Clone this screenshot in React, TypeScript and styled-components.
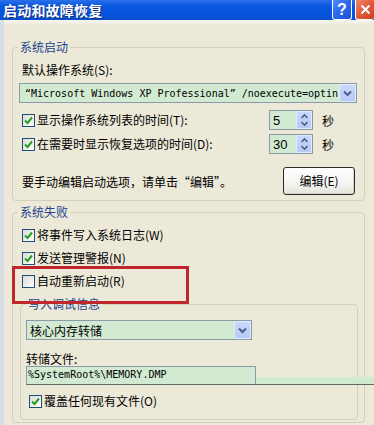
import React from "react";
import styled, { createGlobalStyle } from "styled-components";

const GlobalStyle = createGlobalStyle`
  html, body { margin: 0; padding: 0; background: #ece9d8; }
  body {
    width: 374px; height: 425px; overflow: hidden;
    font-family: "Noto Sans CJK SC", sans-serif;
    font-size: 12px; color: #000;
  }
  * { box-sizing: border-box; }
`;

const Window = styled.div`
  width: 374px;
  height: 425px;
  display: flex;
  flex-direction: column;
  overflow: hidden;
  position: relative;
`;

const TitleBar = styled.div`
  height: 20px;
  flex: 0 0 20px;
  display: flex;
  align-items: flex-start;
  justify-content: space-between;
  padding-left: 3px;
  background: linear-gradient(to bottom, #2a70ea 0%, #0a58df 30%, #0654dc 80%, #0a4cc8 100%);
`;

const Title = styled.div`
  color: #fff;
  font-weight: bold;
  font-size: 14px;
  line-height: 20px;
  letter-spacing: 0.2px;
  text-shadow: 1px 1px 0 #0b2a80;
`;

const TitleButtons = styled.div`
  display: flex;
  gap: 3px;
`;

const CaptionButton = styled.div<{ $kind: "help" | "close" }>`
  width: ${(p) => (p.$kind === "help" ? "20px" : "19px")};
  height: 20px;
  border: 1px solid #fff;
  border-top: none;
  border-radius: 0 0 3px 3px;
  border-right: ${(p) => (p.$kind === "close" ? "none" : "1px solid #fff")};
  background: ${(p) =>
    p.$kind === "help"
      ? "linear-gradient(135deg, #4f8cf7 0%, #2a66ea 50%, #1d52d6 100%)"
      : "linear-gradient(135deg, #f08a6a 0%, #e2593a 50%, #c9401f 100%)"};
  color: #fff;
  font-family: "Liberation Sans", sans-serif;
  font-weight: bold;
  font-size: 16px;
  line-height: 19px;
  text-align: center;
  display: flex;
  align-items: center;
  justify-content: center;
`;

const Body = styled.div`
  flex: 1;
  border-left: 4px solid #d7dee8;
  padding: 20px 9px 0 8px;
  background: linear-gradient(to bottom, #f6f5ef 0px, #ece9d8 6px);
  display: flex;
  flex-direction: column;
`;

const Group = styled.fieldset<{ $gap?: number }>`
  margin: ${(p) => p.$gap ?? 0}px 0 0 0;
  padding: 0;
  border: 1px solid #d0d0bf;
  border-radius: 4px;
  min-width: 0;
`;

const SubGroup = styled(Group)`
  margin: 5px -1px 0 1px;
`;

const Legend = styled.legend`
  margin-left: 5px;
  padding: 0 2px;
  color: #23428e;
  font-size: 12px;
  line-height: 14px;
`;

const GroupInner = styled.div<{ $pt: number; $pb: number; $pl: number; $pr: number }>`
  display: flex;
  flex-direction: column;
  padding: ${(p) => `${p.$pt}px ${p.$pr}px ${p.$pb}px ${p.$pl}px`};
`;

const Label = styled.div<{ $mt?: number; $ml?: number }>`
  line-height: 14px;
  margin-top: ${(p) => p.$mt ?? 0}px;
  margin-left: ${(p) => p.$ml ?? 0}px;
`;

const Combo = styled.div<{ $w?: number; $mt: number; $mono?: boolean }>`
  margin-top: ${(p) => p.$mt}px;
  width: ${(p) => (p.$w ? `${p.$w}px` : "auto")};
  height: 20px;
  border: 1px solid #8a9aa6;
  background: #d2ead2;
  display: flex;
  align-items: center;
  font-family: ${(p) => (p.$mono ? `"DejaVu Sans Mono", monospace` : `"Noto Sans CJK SC", sans-serif`)};
  font-size: ${(p) => (p.$mono ? "10px" : "12px")};
  padding-left: ${(p) => (p.$mono ? "5px" : "3px")};
`;

const ComboText = styled.span`
  flex: 1;
  white-space: nowrap;
  overflow: hidden;
`;

const DropButton = styled.div`
  width: 17px;
  height: 18px;
  border: 1px solid #e2ebfd;
  border-radius: 2px;
  background: linear-gradient(to bottom, #cad9fc 0%, #b6caf6 100%);
  display: flex;
  align-items: center;
  justify-content: center;
`;

const Row = styled.div<{ $mt?: number; $h?: number }>`
  display: flex;
  align-items: center;
  height: ${(p) => p.$h ?? 22}px;
  margin-top: ${(p) => p.$mt ?? 0}px;
  padding-left: 3px;
  position: relative;
`;

const Highlighted = styled(Row)`
  &::after {
    content: "";
    position: absolute;
    left: -7px;
    top: -4px;
    width: 171px;
    height: 32px;
    border: 3px solid #c0272d;
    pointer-events: none;
  }
`;

const CheckLabel = styled.div<{ $w?: number }>`
  display: flex;
  align-items: center;
  gap: 2px;
  flex: ${(p) => (p.$w ? `0 0 ${p.$w}px` : "0 0 auto")};
  line-height: 14px;
  white-space: nowrap;
`;

const Box = styled.span`
  width: 13px;
  height: 13px;
  border: 1px solid #1f4f7c;
  background: linear-gradient(135deg, #dcdcd4 0%, #f4f4f0 70%, #fff 100%);
  display: inline-flex;
  align-items: center;
  justify-content: center;
`;

const Spin = styled.div`
  width: 44px;
  height: 20px;
  border: 1px solid #8a9aa6;
  background: #d2ead2;
  display: flex;
  align-items: center;
  font-family: "Liberation Sans", sans-serif;
  font-size: 13px;
  padding-left: 3px;
`;

const SpinValue = styled.span`
  flex: 1;
`;

const SpinButtons = styled.div`
  width: 16px;
  height: 18px;
  border: 1px solid #e2ebfd;
  border-radius: 2px;
  background: linear-gradient(to bottom, #cad9fc 0%, #b6caf6 100%);
  display: flex;
  align-items: center;
  justify-content: center;
`;

const Sec = styled.span`
  margin-left: 9px;
`;

const EditRow = styled.div`
  display: flex;
  align-items: center;
  justify-content: space-between;
  margin-top: 12px;
  padding: 0 2px 0 3px;
`;

const Button = styled.div`
  width: 72px;
  height: 28px;
  border: 1px solid #2c2c2c;
  border-radius: 3px;
  background: linear-gradient(to bottom, #ffffff 0%, #f4f4f0 60%, #e3e3db 100%);
  box-shadow: inset -1px -1px 0 #d6d0c5;
  display: flex;
  align-items: center;
  justify-content: center;
  line-height: 14px;
`;

const FileField = styled.div`
  position: relative;
  width: 230px;
  height: 19px;
  border: 1px solid #8a9aa6;
  border-bottom-color: #5f6a66;
  background: #d2ead2;
  font-family: "DejaVu Sans Mono", monospace;
  font-size: 10px;
  line-height: 15px;
  padding-left: 1px;
`;

const Band = styled.span`
  position: absolute;
  left: 229px;
  bottom: -1px;
  width: 140px;
  height: 8px;
  background: #d2ead2;
  border-bottom: 1px solid #5f6a66;
`;

const Check = ({ on }: { on: boolean }) => (
  <Box>
    {on && (
      <svg width="11" height="11" viewBox="0 0 11 11">
        <polyline points="2,5.5 4.5,8 9,2.5" fill="none" stroke="#21a121" strokeWidth="2" />
      </svg>
    )}
  </Box>
);

const Chevron = () => (
  <svg width="9" height="7" viewBox="0 0 9 7">
    <polyline points="1,1.5 4.5,5 8,1.5" fill="none" stroke="#4a5e88" strokeWidth="2" />
  </svg>
);

const UpDown = () => (
  <svg width="9" height="14" viewBox="0 0 9 14">
    <polyline points="1.5,5 4.5,2 7.5,5" fill="none" stroke="#4a5e88" strokeWidth="1.6" />
    <polyline points="1.5,9 4.5,12 7.5,9" fill="none" stroke="#4a5e88" strokeWidth="1.6" />
  </svg>
);

export default function App() {
  return (
    <>
      <GlobalStyle />
      <Window lang="zh-CN">
        <TitleBar>
          <Title>启动和故障恢复</Title>
          <TitleButtons>
            <CaptionButton $kind="help">?</CaptionButton>
            <CaptionButton $kind="close">
              <svg width="11" height="11" viewBox="0 0 11 11">
                <path d="M1.5 1.5 L9.5 9.5 M9.5 1.5 L1.5 9.5" stroke="#fff" strokeWidth="2" />
              </svg>
            </CaptionButton>
          </TitleButtons>
        </TitleBar>
        <Body>
          <Group>
            <Legend>系统启动</Legend>
            <GroupInner $pt={9} $pb={5} $pl={6} $pr={7}>
              <Label $ml={3}>默认操作系统(S):</Label>
              <Combo $mt={6} $mono>
                <ComboText>“Microsoft Windows XP Professional” /noexecute=optin</ComboText>
                <DropButton>
                  <Chevron />
                </DropButton>
              </Combo>
              <Row $mt={6}>
                <CheckLabel $w={247}>
                  <Check on />
                  显示操作系统列表的时间(T):
                </CheckLabel>
                <Spin>
                  <SpinValue>5</SpinValue>
                  <SpinButtons>
                    <UpDown />
                  </SpinButtons>
                </Spin>
                <Sec>秒</Sec>
              </Row>
              <Row $mt={2}>
                <CheckLabel $w={247}>
                  <Check on />
                  在需要时显示恢复选项的时间(D):
                </CheckLabel>
                <Spin>
                  <SpinValue>30</SpinValue>
                  <SpinButtons>
                    <UpDown />
                  </SpinButtons>
                </Spin>
                <Sec>秒</Sec>
              </Row>
              <EditRow>
                <span>要手动编辑启动选项，请单击“编辑”。</span>
                <Button>编辑(E)</Button>
              </EditRow>
            </GroupInner>
          </Group>

          <Group $gap={4}>
            <Legend>系统失败</Legend>
            <GroupInner $pt={5} $pb={2} $pl={6} $pr={7}>
              <Row>
                <CheckLabel>
                  <Check on />
                  将事件写入系统日志(W)
                </CheckLabel>
              </Row>
              <Row $mt={1}>
                <CheckLabel>
                  <Check on />
                  发送管理警报(N)
                </CheckLabel>
              </Row>
              <Highlighted $mt={1}>
                <CheckLabel>
                  <Check on={false} />
                  自动重新启动(R)
                </CheckLabel>
              </Highlighted>
              <SubGroup>
                <Legend>写入调试信息</Legend>
                <GroupInner $pt={9} $pb={7} $pl={5} $pr={5}>
                  <Combo $w={226} $mt={0}>
                    <ComboText>核心内存转储</ComboText>
                    <DropButton>
                      <Chevron />
                    </DropButton>
                  </Combo>
                  <Label $mt={12}>转储文件:</Label>
                  <FileField>
                    %SystemRoot%\MEMORY.DMP
                    <Band />
                  </FileField>
                  <Row $mt={5}>
                    <CheckLabel>
                      <Check on />
                      覆盖任何现有文件(O)
                    </CheckLabel>
                  </Row>
                </GroupInner>
              </SubGroup>
            </GroupInner>
          </Group>
        </Body>
      </Window>
    </>
  );
}
